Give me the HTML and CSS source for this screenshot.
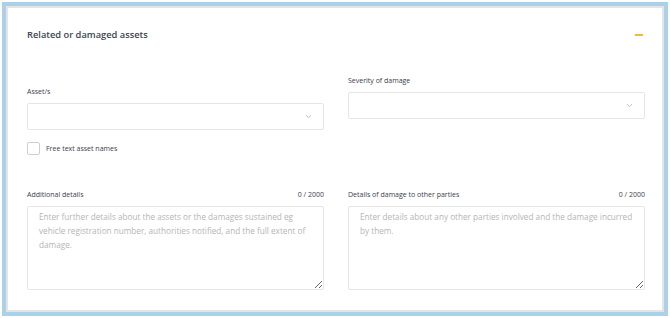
FILE: index.html
```html
<!DOCTYPE html>
<html lang="en">
<head>
  <meta charset="UTF-8">
  <title>Related or damaged assets</title>
  <link rel="stylesheet" href="styles.css">
</head>
<body>
  <div class="frame">
    <div class="card">
      <div class="card-header">
        <h2>Related or damaged assets</h2>
        <span class="collapse"></span>
      </div>

      <div class="fields">
        <div class="field field-low">
          <label class="label">Asset/s</label>
          <div class="select">
            <svg width="7" height="5" viewBox="0 0 7 5"><path d="M1 1.2 L3.5 3.6 L6 1.2" fill="none" stroke="#b8b8b8" stroke-width="0.9"/></svg>
          </div>
          <label class="check">
            <span class="box"></span>
            Free text asset names
          </label>
        </div>

        <div class="field">
          <label class="label">Severity of damage</label>
          <div class="select">
            <svg width="7" height="5" viewBox="0 0 7 5"><path d="M1 1.2 L3.5 3.6 L6 1.2" fill="none" stroke="#b8b8b8" stroke-width="0.9"/></svg>
          </div>
        </div>

        <div class="field">
          <div class="label-row">
            <label class="label">Additional details</label>
            <span class="count">0 / 2000</span>
          </div>
          <textarea placeholder="Enter further details about the assets or the damages sustained eg vehicle registration number, authorities notified, and the full extent of damage."></textarea>
        </div>

        <div class="field">
          <div class="label-row">
            <label class="label">Details of damage to other parties</label>
            <span class="count">0 / 2000</span>
          </div>
          <textarea placeholder="Enter details about any other parties involved and the damage incurred by them."></textarea>
        </div>
      </div>
    </div>
  </div>
</body>
</html>
```

FILE: styles.css
```css
body {
  margin: 0;
  padding: 0;
  background: #fff;
  font-family: 'Open Sans', 'Noto Sans', sans-serif;
  color: #3b4454;
}

.frame {
  margin: 2px;
  height: 314px;
  box-sizing: border-box;
  border: 4px solid #a9d2ea;
}

.card {
  height: 100%;
  box-sizing: border-box;
  border: 2px solid #e4e4e4;
  background: #fff;
  padding: 19px 17px 0 19px;
}

.card-header {
  display: flex;
  justify-content: space-between;
  align-items: center;
  height: 16px;
}

h2 {
  margin: 0;
  font-size: 9.3px;
  font-weight: 600;
  color: #3a4556;
  line-height: 16px;
}

.collapse {
  width: 8px;
  height: 1.5px;
  background: #f6b83c;
  margin-right: 2px;
}

.fields {
  display: grid;
  grid-template-columns: 297px 297px;
  column-gap: 24px;
  row-gap: 35px;
  align-items: start;
  margin-top: 33px;
}

.field {
  display: flex;
  flex-direction: column;
}

.field-low {
  padding-top: 11px;
}

.label {
  font-size: 7px;
  line-height: 10px;
  color: #3a404c;
  margin-bottom: 6px;
}

.label-row {
  display: flex;
  justify-content: space-between;
  align-items: center;
  margin-bottom: 6px;
}

.label-row .label {
  margin-bottom: 0;
}

.count {
  font-size: 7px;
  line-height: 10px;
  color: #3a404c;
}

.select {
  height: 27px;
  box-sizing: border-box;
  border: 1px solid #e6e6e6;
  border-radius: 2px;
  display: flex;
  align-items: center;
  justify-content: flex-end;
  padding-right: 11px;
}

.check {
  display: flex;
  align-items: center;
  gap: 6px;
  margin-top: 12px;
  font-size: 7px;
  color: #3a404c;
}

.box {
  width: 13px;
  height: 13px;
  box-sizing: border-box;
  border: 1px solid #cfcfcf;
  border-radius: 2px;
}

textarea {
  height: 84px;
  box-sizing: border-box;
  border: 1px solid #e6e6e6;
  border-radius: 2px;
  padding: 3px 8px 3px 11px;
  font-family: 'Open Sans', 'Noto Sans', sans-serif;
  font-size: 8.2px;
  line-height: 14px;
  color: #333;
  resize: vertical;
  outline: none;
}

textarea::placeholder {
  color: #b5b5b5;
}
```
